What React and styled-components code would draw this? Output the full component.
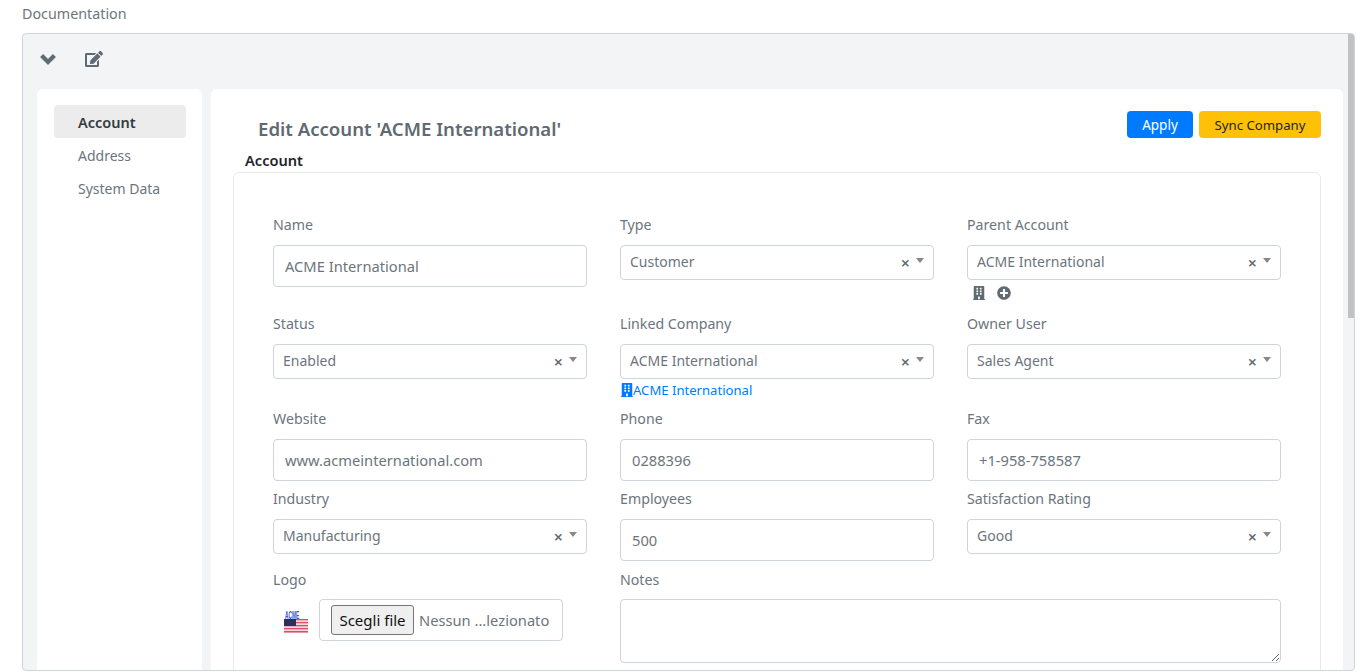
import React from "react";
import styled, { createGlobalStyle } from "styled-components";
import { FaEdit, FaBuilding, FaPlusCircle } from "react-icons/fa";

const Global = createGlobalStyle`
  html, body {
    margin: 0;
    height: 100%;
    overflow: hidden;
    background: #fff;
    font-family: "Noto Sans", "Open Sans", Arial, sans-serif;
    font-size: 14px;
    color: #6c757d;
  }
  * { box-sizing: border-box; }
`;

const Page = styled.div`
  height: 672px;
  padding-left: 22px;
  padding-right: 5px;
  display: flex;
  flex-direction: column;
`;

const PageTitle = styled.div`
  height: 33px;
  line-height: 28px;
  font-size: 14.3px;
  color: #6c757d;
`;

const Shell = styled.div`
  position: relative;
  height: 638px;
  border: 1px solid #ced4da;
  border-radius: 4px;
  background: #f3f4f6;
  overflow: hidden;
`;

const ScrollThumb = styled.div`
  position: absolute;
  top: 0;
  right: 0;
  width: 6px;
  height: 284px;
  background: #c1c1c1;
`;

const Toolbar = styled.div`
  height: 55px;
  padding: 0 0 5px 16px;
  display: flex;
  align-items: center;
  gap: 28px;
  color: #5f6a72;
  font-size: 18px;

  svg { display: block; }
`;

const Body = styled.div`
  display: grid;
  grid-template-columns: 165px 1132px;
  gap: 9px;
  padding-left: 14px;
  height: 1368px;
`;

const Side = styled.nav`
  background: #fff;
  border-radius: 6px;
  padding: 16px 16px 16px 17px;
`;

const NavItem = styled.div`
  height: 33px;
  line-height: 35px;
  padding-left: 24px;
  border-radius: 4px;
  font-size: ${p => (p.$active ? "14.5px" : "14px")};
  background: ${p => (p.$active ? "#ececec" : "transparent")};
  color: ${p => (p.$active ? "#343a40" : "#6c757d")};
  font-weight: ${p => (p.$active ? 600 : 400)};
`;

const Main = styled.section`
  background: #fff;
  border-radius: 6px;
  padding: 22px 22px 0;
`;

const Header = styled.div`
  display: flex;
  justify-content: space-between;
  align-items: flex-start;
  height: 38px;
`;

const Title = styled.h2`
  margin: 6px 0 0 25px;
  font-size: 18.6px;
  line-height: 24px;
  font-weight: 600;
  color: #5f6a72;
`;

const Buttons = styled.div`
  display: flex;
  gap: 6px;
`;

const Button = styled.button`
  height: 27px;
  padding: 0;
  width: ${p => p.$w}px;
  border: 0;
  border-radius: 4px;
  font: inherit;
  font-size: ${p => (p.$warn ? "13.2px" : "13.5px")};
  background: ${p => (p.$warn ? "#ffc107" : "#007bff")};
  color: ${p => (p.$warn ? "#212529" : "#fff")};
`;

const SectionLabel = styled.div`
  height: 23px;
  line-height: 23px;
  padding-left: 12px;
  font-size: 14.6px;
  font-weight: 600;
  color: #212529;
`;

const Card = styled.div`
  width: 1088px;
  border: 1px solid #e7e9ec;
  border-radius: 6px;
  padding: 42px 39px 0;
  height: 1240px;
`;

const Grid = styled.div`
  display: grid;
  grid-template-columns: repeat(3, 314px);
  column-gap: 33px;
  row-gap: 8px;
`;

const Field = styled.div`
  display: flex;
  flex-direction: column;
  grid-column: ${p => p.$span || "auto"};
`;

const Label = styled.label`
  height: 30px;
  line-height: ${p => (p.$low ? "22px" : "20px")};
  font-size: 14.2px;
  color: #6c757d;
`;

const Input = styled.input`
  height: 42px;
  width: 100%;
  padding: 0 11px;
  border: 1px solid #ced4da;
  border-radius: 4px;
  font: inherit;
  font-size: 14.7px;
  color: #6c757d;
  background: #fff;
  outline: none;
`;

const SelectBox = styled.div`
  height: 35px;
  padding: 0 9px 2px;
  display: flex;
  align-items: center;
  border: 1px solid #ced4da;
  border-radius: 4px;
  background: #fff;
  font-size: 14px;
  color: #6c757d;
`;

const SelectValue = styled.span`
  flex: 1;
`;

const Clear = styled.span`
  font-size: 16px;
  line-height: 17px;
  font-weight: 600;
  color: #5f6a72;
  margin-top: 3px;
`;

const Arrow = styled.span`
  margin-left: 6px;
  margin-top: -3px;
  border-left: 4px solid transparent;
  border-right: 4px solid transparent;
  border-top: 5px solid #888;
`;

const IconRow = styled.div`
  height: 26px;
  padding: 6px 0 0 5px;
  display: flex;
  gap: 11px;
  color: #5f6a72;
  font-size: 14px;
`;

const LinkRow = styled.a`
  height: 22px;
  line-height: 22px;
  font-size: 13.1px;
  color: #007bff;
  display: flex;
  align-items: center;

  svg {
    font-size: 14px;
    margin-right: -1px;
  }
`;

const LogoRow = styled.div`
  display: flex;
  align-items: flex-start;
  gap: 11px;
  padding-left: 11px;
`;

const LogoSvg = styled.svg`
  width: 24px;
  height: 30px;
  margin-top: 6px;
  flex: none;
`;

const FileBox = styled.div`
  width: 244px;
  height: 42px;
  padding-left: 11px;
  display: flex;
  align-items: center;
  gap: 5px;
  border: 1px solid #ced4da;
  border-radius: 4px;
  white-space: nowrap;
  font-size: 14.7px;
  color: #6c757d;
`;

const FileButton = styled.span`
  width: 83px;
  height: 30px;
  line-height: 28px;
  text-align: center;
  font-size: 15px;
  border: 1px solid #767676;
  border-radius: 3px;
  background: #efefef;
  color: #111;
`;

const Notes = styled.textarea`
  display: block;
  width: 100%;
  height: 64px;
  border: 1px solid #ced4da;
  border-radius: 4px;
  outline: none;
  font: inherit;
`;

const ChevronIcon = () => (
  <svg width="18" height="12" viewBox="0 0 18 12">
    <polyline points="2.6,2.6 9,9 15.4,2.6" fill="none" stroke="currentColor" strokeWidth="4.2" />
  </svg>
);

const AcmeLogo = () => (
  <LogoSvg viewBox="0 -6 24 30">
    <g transform="translate(1 7.6) scale(0.48 1)">
      <text x="0" y="0" fontSize="10" fontWeight="700" fontFamily="Liberation Sans, sans-serif" fill="#3a4fe0">ACME</text>
    </g>
    {[8, 11, 14, 17, 20].map(y => (
      <rect key={y} x="0" y={y} width="24" height="1.6" fill="#d9506a" />
    ))}
    {[9.6, 12.6, 15.6, 18.6].map(y => (
      <rect key={y} x="0" y={y} width="24" height="1.4" fill="#f4d6dc" />
    ))}
    <rect x="0" y="8" width="12" height="7" fill="#2b2f5e" />
  </LogoSvg>
);

const Select = ({ value }) => (
  <SelectBox>
    <SelectValue>{value}</SelectValue>
    <Clear>×</Clear>
    <Arrow />
  </SelectBox>
);

export default function App() {
  return (
    <Page>
      <Global />
      <PageTitle>Documentation</PageTitle>
      <Shell>
        <ScrollThumb />
        <Toolbar>
          <ChevronIcon />
          <FaEdit />
        </Toolbar>
        <Body>
          <Side>
            <NavItem $active>Account</NavItem>
            <NavItem>Address</NavItem>
            <NavItem>System Data</NavItem>
          </Side>
          <Main>
            <Header>
              <Title>Edit Account 'ACME International'</Title>
              <Buttons>
                <Button $w={66}>Apply</Button>
                <Button $w={122} $warn>Sync Company</Button>
              </Buttons>
            </Header>
            <SectionLabel>Account</SectionLabel>
            <Card>
              <Grid>
                <Field>
                  <Label>Name</Label>
                  <Input defaultValue="ACME International" />
                </Field>
                <Field>
                  <Label>Type</Label>
                  <Select value="Customer" />
                </Field>
                <Field>
                  <Label>Parent Account</Label>
                  <Select value="ACME International" />
                  <IconRow><FaBuilding /><FaPlusCircle /></IconRow>
                </Field>
                <Field>
                  <Label>Status</Label>
                  <Select value="Enabled" />
                </Field>
                <Field>
                  <Label>Linked Company</Label>
                  <Select value="ACME International" />
                  <LinkRow><FaBuilding />ACME International</LinkRow>
                </Field>
                <Field>
                  <Label>Owner User</Label>
                  <Select value="Sales Agent" />
                </Field>
                <Field>
                  <Label>Website</Label>
                  <Input defaultValue="www.acmeinternational.com" />
                </Field>
                <Field>
                  <Label>Phone</Label>
                  <Input defaultValue="0288396" />
                </Field>
                <Field>
                  <Label>Fax</Label>
                  <Input defaultValue="+1-958-758587" />
                </Field>
                <Field>
                  <Label>Industry</Label>
                  <Select value="Manufacturing" />
                </Field>
                <Field>
                  <Label>Employees</Label>
                  <Input defaultValue="500" />
                </Field>
                <Field>
                  <Label>Satisfaction Rating</Label>
                  <Select value="Good" />
                </Field>
                <Field>
                  <Label $low>Logo</Label>
                  <LogoRow>
                    <AcmeLogo />
                    <FileBox>
                      <FileButton>Scegli file</FileButton>
                      Nessun ...lezionato
                    </FileBox>
                  </LogoRow>
                </Field>
                <Field $span="span 2">
                  <Label $low>Notes</Label>
                  <Notes />
                </Field>
              </Grid>
            </Card>
          </Main>
        </Body>
      </Shell>
    </Page>
  );
}
